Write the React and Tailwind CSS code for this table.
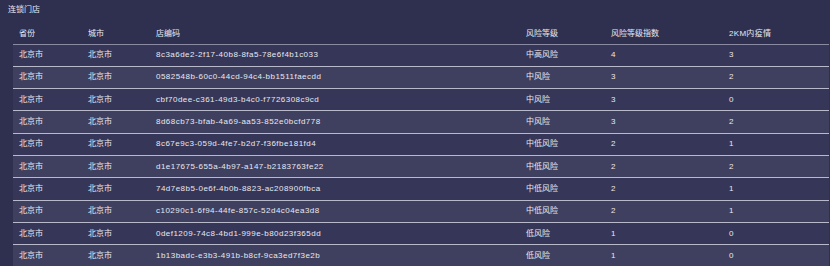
const rows = [
  ['8c3a6de2-2f17-40b8-8fa5-78e6f4b1c033', '中高风险', 4, 3],
  ['0582548b-60c0-44cd-94c4-bb1511faecdd', '中风险', 3, 2],
  ['cbf70dee-c361-49d3-b4c0-f7726308c9cd', '中风险', 3, 0],
  ['8d68cb73-bfab-4a69-aa53-852e0bcfd778', '中风险', 3, 2],
  ['8c67e9c3-059d-4fe7-b2d7-f36fbe181fd4', '中低风险', 2, 1],
  ['d1e17675-655a-4b97-a147-b2183763fe22', '中低风险', 2, 2],
  ['74d7e8b5-0e6f-4b0b-8823-ac208900fbca', '中低风险', 2, 1],
  ['c10290c1-6f94-44fe-857c-52d4c04ea3d8', '中低风险', 2, 1],
  ['0def1209-74c8-4bd1-999e-b80d23f365dd', '低风险', 1, 0],
  ['1b13badc-e3b3-491b-b8cf-9ca3ed7f3e2b', '低风险', 1, 0],
]

const font = { fontFamily: '"Liberation Sans", "Noto Sans CJK SC", sans-serif' }

export default function App() {
  return (
    <div className="w-[830px] h-[266px] overflow-hidden bg-[#2f3050] text-[#e8e8f0] text-[8px] leading-none" style={font}>
      <div className="pl-2 pt-[6px] h-[24px]">连锁门店</div>
      <table className="ml-[13px] w-[816px] table-fixed border-collapse">
        <colgroup>
          <col className="w-[69px]" />
          <col className="w-[68px]" />
          <col className="w-[370px]" />
          <col className="w-[85px]" />
          <col className="w-[118px]" />
          <col className="w-[106px]" />
        </colgroup>
        <thead>
          <tr className="h-[20px] border-b border-[#8a8aa2]">
            <th className="text-left font-normal px-[6px]">省份</th>
            <th className="text-left font-normal px-[6px]">城市</th>
            <th className="text-left font-normal px-[6px]">店编码</th>
            <th className="text-left font-normal px-[6px]">风险等级</th>
            <th className="text-left font-normal px-[6px]">风险等级指数</th>
            <th className="text-left font-normal px-[6px] tracking-[0.3px]">2KM内疫情</th>
          </tr>
        </thead>
        <tbody>
          {rows.map((r, i) => (
            <tr key={i} className={`h-[22.3px] border-b border-[#b9b9cc] ${i % 2 ? 'bg-[#3f405f]' : 'bg-[#363758]'}`}>
              <td className="px-[6px]">北京市</td>
              <td className="px-[6px]">北京市</td>
              <td className="px-[6px] tracking-[0.47px]">{r[0]}</td>
              <td className="px-[6px]">{r[1]}</td>
              <td className="px-[6px]">{r[2]}</td>
              <td className="px-[6px]">{r[3]}</td>
            </tr>
          ))}
        </tbody>
      </table>
    </div>
  )
}
